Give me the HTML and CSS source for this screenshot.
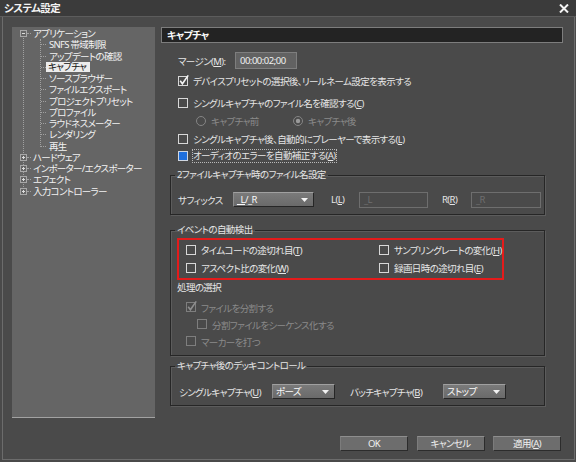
FILE: index.html
```html
<!DOCTYPE html>
<html lang="ja">
<head>
<meta charset="utf-8">
<title>システム設定</title>
<link rel="stylesheet" href="styles.css">
</head>
<body>
<div class="window">
  <div class="titlebar">
    <span class="title">システム設定</span>
    <svg class="close" width="10" height="9" viewBox="0 0 10 9"><path d="M1 0.5 L9 8.5 M9 0.5 L1 8.5" stroke="#f4f4f4" stroke-width="2"/></svg>
  </div>
  <div class="frame">
    <div class="main">
      <div class="tree">
        <div class="roots">
          <div class="node">
            <div class="row root"><svg class="exp" width="7" height="7" viewBox="0 0 7 7"><rect x="0.5" y="0.5" width="6" height="6" fill="#656565" stroke="#a8a8a8"/><path d="M2 3.5 H5" stroke="#dcdcdc"/></svg><span class="stub"></span><span class="lbl">アプリケーション</span></div>
            <div class="children">
              <div class="row child"><span class="stub"></span><span class="lbl">SNFS 帯域制限</span></div>
              <div class="row child"><span class="stub"></span><span class="lbl">アップデートの確認</span></div>
              <div class="row child"><span class="stub"></span><span class="lbl selected">キャプチャ</span></div>
              <div class="row child"><span class="stub"></span><span class="lbl">ソースブラウザー</span></div>
              <div class="row child"><span class="stub"></span><span class="lbl">ファイルエクスポート</span></div>
              <div class="row child"><span class="stub"></span><span class="lbl">プロジェクトプリセット</span></div>
              <div class="row child"><span class="stub"></span><span class="lbl">プロファイル</span></div>
              <div class="row child"><span class="stub"></span><span class="lbl">ラウドネスメーター</span></div>
              <div class="row child"><span class="stub"></span><span class="lbl">レンダリング</span></div>
              <div class="row child"><span class="stub"></span><span class="lbl">再生</span></div>
            </div>
          </div>
          <div class="row root"><svg class="exp" width="7" height="7" viewBox="0 0 7 7"><rect x="0.5" y="0.5" width="6" height="6" fill="#656565" stroke="#a8a8a8"/><path d="M2 3.5 H5 M3.5 2 V5" stroke="#dcdcdc"/></svg><span class="stub"></span><span class="lbl">ハードウェア</span></div>
          <div class="row root"><svg class="exp" width="7" height="7" viewBox="0 0 7 7"><rect x="0.5" y="0.5" width="6" height="6" fill="#656565" stroke="#a8a8a8"/><path d="M2 3.5 H5 M3.5 2 V5" stroke="#dcdcdc"/></svg><span class="stub"></span><span class="lbl">インポーター/エクスポーター</span></div>
          <div class="row root"><svg class="exp" width="7" height="7" viewBox="0 0 7 7"><rect x="0.5" y="0.5" width="6" height="6" fill="#656565" stroke="#a8a8a8"/><path d="M2 3.5 H5 M3.5 2 V5" stroke="#dcdcdc"/></svg><span class="stub"></span><span class="lbl">エフェクト</span></div>
          <div class="row root last"><svg class="exp" width="7" height="7" viewBox="0 0 7 7"><rect x="0.5" y="0.5" width="6" height="6" fill="#656565" stroke="#a8a8a8"/><path d="M2 3.5 H5 M3.5 2 V5" stroke="#dcdcdc"/></svg><span class="stub"></span><span class="lbl">入力コントローラー</span></div>
        </div>
      </div>

      <div class="panel">
        <div class="panel-head">キャプチャ</div>
        <div class="panel-body">
          <div class="line margin-row"><span class="mlabel">マージン(<u>M</u>):</span><div class="field">00:00:02;00</div></div>

          <div class="line chk r-check1"><svg class="cb" width="11" height="11" viewBox="0 0 11 11"><rect x="0.5" y="0.5" width="9" height="9" fill="none" stroke="#d8d8d8"/><path d="M2.2 4.8 L4.4 7.8 L10.2 -0.6" fill="none" stroke="#f4f4f4" stroke-width="1.6"/></svg><span>デバイスプリセットの選択後、リールネーム設定を表示する</span></div>

          <div class="line chk r-check2"><svg class="cb" width="11" height="11" viewBox="0 0 11 11"><rect x="0.5" y="0.5" width="9" height="9" fill="none" stroke="#d8d8d8"/></svg><span>シングルキャプチャのファイル名を確認する(<u>C</u>)</span></div>

          <div class="line radios">
            <div class="radio-item"><svg class="rb" width="10" height="10" viewBox="0 0 10 10"><circle cx="5" cy="5" r="4.5" fill="none" stroke="#858585"/></svg><span>キャプチャ前</span></div>
            <div class="radio-item"><svg class="rb" width="10" height="10" viewBox="0 0 10 10"><circle cx="5" cy="5" r="4.5" fill="none" stroke="#858585"/><circle cx="5" cy="5" r="2.2" fill="#9a9a9a"/></svg><span>キャプチャ後</span></div>
          </div>

          <div class="line chk r-check3"><svg class="cb" width="11" height="11" viewBox="0 0 11 11"><rect x="0.5" y="0.5" width="9" height="9" fill="none" stroke="#d8d8d8"/></svg><span>シングルキャプチャ後、自動的にプレーヤーで表示する(<u>L</u>)</span></div>

          <div class="line chk r-check4"><svg class="cb" width="11" height="11" viewBox="0 0 11 11"><rect x="0.5" y="0.5" width="9" height="9" fill="#1f6fdc" stroke="#cfd6e0"/></svg><span class="focus">オーディオのエラーを自動補正する(<u>A</u>)</span></div>

          <fieldset class="group g1">
            <legend>2ファイルキャプチャ時のファイル名設定</legend>
            <div class="suffix-row">
              <span class="slabel">サフィックス</span>
              <div class="select s-suffix"><span><u>_L</u>/_R</span><svg width="7" height="4" viewBox="0 0 7 4"><path d="M0 0 H7 L3.5 4 Z" fill="#f2f2f2"/></svg></div>
              <span class="lr-label l-lab">L(<u>L</u>)</span>
              <div class="dfield f-l">_L</div>
              <span class="lr-label r-lab">R(<u>R</u>)</span>
              <div class="dfield f-r">_R</div>
            </div>
          </fieldset>

          <fieldset class="group g2">
            <legend>イベントの自動検出</legend>
            <div class="highlight">
              <div class="hcell"><svg class="cb" width="11" height="11" viewBox="0 0 11 11"><rect x="0.5" y="0.5" width="9" height="9" fill="none" stroke="#d8d8d8"/></svg><span>タイムコードの途切れ目(<u>T</u>)</span></div>
              <div class="hcell"><svg class="cb" width="11" height="11" viewBox="0 0 11 11"><rect x="0.5" y="0.5" width="9" height="9" fill="none" stroke="#d8d8d8"/></svg><span>サンプリングレートの変化(<u>H</u>)</span></div>
              <div class="hcell"><svg class="cb" width="11" height="11" viewBox="0 0 11 11"><rect x="0.5" y="0.5" width="9" height="9" fill="none" stroke="#d8d8d8"/></svg><span>アスペクト比の変化(<u>W</u>)</span></div>
              <div class="hcell"><svg class="cb" width="11" height="11" viewBox="0 0 11 11"><rect x="0.5" y="0.5" width="9" height="9" fill="none" stroke="#d8d8d8"/></svg><span>録画日時の途切れ目(<u>E</u>)</span></div>
            </div>
            <div class="proc-title">処理の選択</div>
            <div class="dchk ind1"><svg class="cb" width="11" height="11" viewBox="0 0 11 11"><rect x="0.5" y="0.5" width="9" height="9" fill="none" stroke="#7e7e7e"/><path d="M2.2 4.8 L4.4 7.8 L10.2 -0.6" fill="none" stroke="#8e8e8e" stroke-width="1.6"/></svg><span>ファイルを分割する</span></div>
            <div class="dchk ind2"><svg class="cb" width="11" height="11" viewBox="0 0 11 11"><rect x="0.5" y="0.5" width="9" height="9" fill="none" stroke="#7e7e7e"/></svg><span>分割ファイルをシーケンス化する</span></div>
            <div class="dchk ind1"><svg class="cb" width="11" height="11" viewBox="0 0 11 11"><rect x="0.5" y="0.5" width="9" height="9" fill="none" stroke="#7e7e7e"/></svg><span>マーカーを打つ</span></div>
          </fieldset>

          <fieldset class="group g3">
            <legend>キャプチャ後のデッキコントロール</legend>
            <div class="deck-row">
              <span class="dlabel">シングルキャプチャ(<u>U</u>)</span>
              <div class="select s-deck"><span>ポーズ</span><svg width="7" height="4" viewBox="0 0 7 4"><path d="M0 0 H7 L3.5 4 Z" fill="#f2f2f2"/></svg></div>
              <span class="dlabel d2">バッチキャプチャ(<u>B</u>)</span>
              <div class="select s-deck"><span>ストップ</span><svg width="7" height="4" viewBox="0 0 7 4"><path d="M0 0 H7 L3.5 4 Z" fill="#f2f2f2"/></svg></div>
            </div>
          </fieldset>
        </div>
      </div>
    </div>
    <div class="buttons">
      <div class="btn">OK</div>
      <div class="btn">キャンセル</div>
      <div class="btn">適用(<u>A</u>)</div>
    </div>
  </div>
</div>
</body>
</html>
```

FILE: styles.css
```css
* { box-sizing: border-box; }
html, body { margin: 0; padding: 0; }
body {
  width: 576px;
  height: 462px;
  overflow: hidden;
  background: #4a4a4a;
  font-family: "Noto Sans", "Noto Sans CJK JP", sans-serif;
  font-size: 9.5px;
  letter-spacing: -0.6px;
  color: #e6e6e6;
  font-feature-settings: "palt";
}
u { text-decoration-thickness: 1px; text-underline-offset: 1px; }

.window {
  width: 576px;
  height: 462px;
  display: flex;
  flex-direction: column;
  background: #4a4a4a;
}

.titlebar {
  height: 17px;
  flex: none;
  background: #3b3b3b;
  border-bottom: 1px solid #5c5c5c;
  display: flex;
  align-items: center;
  justify-content: space-between;
  padding: 0 7px 0 4px;
}
.title {
  font-size: 10.5px;
  font-weight: bold;
  letter-spacing: -0.6px;
  color: #f4f4f4;
  line-height: 16px;
}
.close { display: block; }

.frame {
  flex: 1;
  margin: 0 1px 2px 2px;
  border: 1px solid #6c6c6c;
  border-top: none;
  padding: 10px 11px 0 9px;
  display: flex;
  flex-direction: column;
}

.main {
  display: flex;
  height: 391px;
  flex: none;
}

/* ---------- tree ---------- */
.tree {
  width: 143px;
  height: 391px;
  background: #656565;
  border-bottom: 1px solid #a2a2a2;
  padding-top: 1px;
  color: #f2f2f2;
  letter-spacing: -0.7px;
}
.roots { position: relative; }
.roots::before {
  content: "";
  position: absolute;
  left: 11px;
  top: 6px;
  bottom: 6px;
  border-left: 1px dotted #a0a0a0;
}
.row {
  height: 11.25px;
  line-height: 11.25px;
  display: flex;
  align-items: center;
  white-space: nowrap;
}
.root { padding-left: 8px; }
.exp { position: relative; flex: none; display: block; }
.root .stub {
  width: 4px;
  border-top: 1px dotted #a0a0a0;
}
.root .lbl { margin-left: 2px; }
.children { position: relative; }
.children::before {
  content: "";
  position: absolute;
  left: 28px;
  top: 0;
  bottom: 5px;
  border-left: 1px dotted #a0a0a0;
}
.child { padding-left: 29px; }
.child .stub {
  width: 5px;
  border-top: 1px dotted #a0a0a0;
}
.child .lbl { margin-left: 2px; padding: 0 1px; }
.child .lbl.selected {
  background: #ececec;
  color: #111;
  line-height: 10px;
  padding: 0 4px 0 2px;
  margin-left: 0;
}

/* ---------- panel ---------- */
.panel {
  width: 402px;
  margin-left: 6px;
  display: flex;
  flex-direction: column;
}
.panel-head {
  height: 16px;
  background: #232323;
  border: 1px solid #7d7d7d;
  font-size: 10px;
  font-weight: bold;
  letter-spacing: -0.6px;
  color: #fafafa;
  line-height: 14px;
  padding-left: 5px;
}
.panel-body {
  padding-left: 9px;
  display: flex;
  flex-direction: column;
}
.line {
  padding-left: 7px;
  display: flex;
  align-items: center;
  white-space: nowrap;
}
.margin-row { height: 17px; margin-top: 9px; }
.mlabel { width: 58px; padding-left: 1px; }
.field {
  width: 62px;
  height: 17px;
  background: #626262;
  border: 1px solid #7e7e7e;
  color: #f0f0f0;
  line-height: 15px;
  padding-left: 4px;
  letter-spacing: -0.5px;
}
.chk { height: 14px; }
.cb { flex: none; display: block; overflow: visible; margin-right: 4px; margin-left: 1px; }
.r-check1 { margin-top: 5px; }
.r-check2 { margin-top: 8px; }
.radios { height: 14px; margin-top: 4px; padding-left: 26px; color: #8a8a8a; }
.radio-item { display: flex; align-items: center; width: 97px; }
.rb { display: block; margin-right: 5px; }
.r-check3 { margin-top: 4px; }
.r-check4 { margin-top: 3px; }
.focus { outline: 1px dotted #b8b8b8; outline-offset: 0; line-height: 12px; }

/* ---------- groups ---------- */
.group {
  width: 375px;
  margin: 0;
  padding: 0 0 0 6px;
  border: 1px solid #262626;
  box-shadow: 1px 1px 0 #5c5c5c, inset 1px 1px 0 #5c5c5c;
  min-width: 0;
}
.group legend {
  padding: 0 2px;
  margin-left: -2px;
  line-height: 12px;
  white-space: nowrap;
}
.g1 { margin-top: 6px; padding-bottom: 7px; }
.g2 { margin-top: 9px; padding-bottom: 5px; }
.g3 { margin-top: 4px; padding-bottom: 6px; }

.suffix-row, .deck-row {
  display: flex;
  align-items: center;
  height: 15px;
  white-space: nowrap;
}
.suffix-row { margin-top: 11px; }
.deck-row { margin-top: 12px; }
.slabel { width: 56px; padding-left: 1px; }
.select {
  height: 15px;
  background: linear-gradient(#7a7a7a, #6a6a6a);
  border-top: 1px solid #a0a0a0;
  border-left: 1px solid #8c8c8c;
  border-right: 1px solid #262626;
  border-bottom: 1px solid #262626;
  color: #fafafa;
  display: flex;
  align-items: center;
  justify-content: space-between;
  padding: 0 5px 0 3px;
  line-height: 13px;
}
.select svg { display: block; }
.s-suffix { width: 81px; }
.lr-label { margin-left: 17px; width: 28px; }
.r-lab { margin-left: 14px; width: 29px; }
.dfield {
  height: 16px;
  border: 1px solid #6e6e6e;
  color: #6f6f6f;
  line-height: 14px;
  padding-left: 4px;
}
.f-l { width: 69px; }
.f-r { width: 70px; }

.highlight {
  width: 327px;
  margin-top: 2px;
  border: 2px solid #e41b1b;
  padding: 1px 0 1px 7px;
  display: grid;
  grid-template-columns: 193px 1fr;
}
.hcell {
  height: 18px;
  display: flex;
  align-items: center;
  white-space: nowrap;
}
.hcell .cb { margin-left: 0; }
.proc-title { height: 14px; line-height: 14px; margin-top: 1px; }
.dchk {
  height: 17px;
  display: flex;
  align-items: center;
  color: #8a8a8a;
  white-space: nowrap;
}
.proc-title + .dchk { margin-top: 4px; }
.ind1 { padding-left: 9px; }
.ind2 { padding-left: 20px; }
.dchk .cb { margin-left: 0; }

.dlabel { width: 95px; padding-left: 2px; }
.dlabel.d2 { margin-left: 15px; width: 93px; padding-left: 0; }
.s-deck { width: 63px; }

/* ---------- buttons ---------- */
.buttons {
  display: flex;
  justify-content: flex-end;
  gap: 8.5px;
  margin-top: 18px;
  padding-right: 2px;
}
.btn {
  width: 68px;
  height: 15px;
  background: #6d6d6d;
  border-top: 1px solid #8e8e8e;
  border-left: 1px solid #7c7c7c;
  border-right: 1px solid #2c2c2c;
  border-bottom: 1px solid #2c2c2c;
  color: #f0f0f0;
  text-align: center;
  line-height: 13px;
}
```
